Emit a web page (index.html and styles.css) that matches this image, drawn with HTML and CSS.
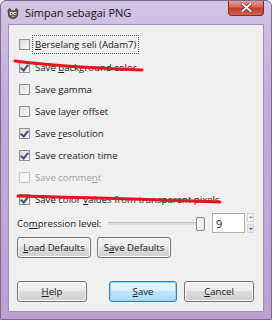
FILE: index.html
```html
<!DOCTYPE html>
<html lang="id">
<head>
<meta charset="UTF-8">
<title>Simpan sebagai PNG</title>
<link rel="stylesheet" href="styles.css">
</head>
<body>
<div class="window">
    <div class="titlebar">
        <svg class="app-icon" width="12" height="11" viewBox="0 0 12 11">
            <path d="M1 2 L3 0.5 L4 3 L8 3 L9 0.5 L11 2 L10.5 6 Q11 10 6 10.5 Q1 10 1.5 6 Z" fill="#6b6457" stroke="#2e2a24" stroke-width="0.8"/>
            <circle cx="4.3" cy="5.3" r="1.6" fill="#fff"/>
            <circle cx="7.7" cy="5.3" r="1.6" fill="#fff"/>
            <circle cx="4.6" cy="5.5" r="0.7" fill="#000"/>
            <circle cx="8" cy="5.5" r="0.7" fill="#000"/>
            <path d="M4.5 8.3 Q6 9.3 7.5 8.3" stroke="#c9a86a" stroke-width="0.9" fill="none"/>
        </svg>
        <span class="title">Simpan sebagai PNG</span>
        <div class="close">
            <svg width="11" height="9" viewBox="0 0 11 9">
                <path d="M1.5 1 L9.5 8 M9.5 1 L1.5 8" stroke="#6a2a22" stroke-width="3.2" stroke-linecap="square"/>
                <path d="M1.5 1 L9.5 8 M9.5 1 L1.5 8" stroke="#fff" stroke-width="1.8" stroke-linecap="square"/>
            </svg>
        </div>
    </div>

    <div class="content">
        <div class="options">
            <label class="row first"><span class="box"></span><span class="text focus"><u>B</u>erselang seli (Adam7)</span></label>
            <label class="row"><span class="box checked"></span><span class="text">Save <u>b</u>ackground color</span></label>
            <label class="row"><span class="box"></span><span class="text">Save gamma</span></label>
            <label class="row"><span class="box"></span><span class="text">Save layer offset</span></label>
            <label class="row"><span class="box checked"></span><span class="text">Save <u>r</u>esolution</span></label>
            <label class="row"><span class="box checked"></span><span class="text">Save creation time</span></label>
            <label class="row disabled"><span class="box"></span><span class="text">Save comme<u>n</u>t</span></label>
            <label class="row"><span class="box checked"></span><span class="text">Save color <u>v</u>alues from transparent pixels</span></label>
        </div>

        <div class="compression">
            <span class="label">Co<u>m</u>pression level:</span>
            <div class="slider"><span class="thumb"></span></div>
            <div class="spin">
                <span class="spin-value">9</span>
                <div class="arrows">
                    <span class="arrow up"></span>
                    <span class="arrow down"></span>
                </div>
            </div>
        </div>

        <div class="defaults">
            <button class="btn wide"><u>L</u>oad Defaults</button>
            <button class="btn wide">S<u>a</u>ve Defaults</button>
        </div>

        <div class="actions">
            <button class="btn"><u>H</u>elp</button>
            <div class="right">
                <button class="btn default"><u>S</u>ave</button>
                <button class="btn"><u>C</u>ancel</button>
            </div>
        </div>
    </div>

    <!-- hand-drawn marks on top of the screenshot -->
    <svg class="marks" width="272" height="320" viewBox="0 0 272 320">
        <path d="M15 61 Q60 67 142 70" stroke="#e8141c" stroke-width="3" fill="none" stroke-linecap="round"/>
        <path d="M18 196 Q110 198 220 202" stroke="#e8141c" stroke-width="3" fill="none" stroke-linecap="round"/>
    </svg>
</div>
</body>
</html>
```

FILE: styles.css
```css
body {
    margin: 0;
    background: #fff;
}

.window {
    position: relative;
    width: 272px;
    height: 320px;
    box-sizing: border-box;
    border: 1px solid #7a6a92;
    border-radius: 6px 6px 0 0;
    background: linear-gradient(#d3c4e4, #c3add9 30%, #b9a2d2);
    font-family: "Open Sans", "Noto Sans", sans-serif;
    font-size: 9.6px;
    color: #1a1a1a;
    overflow: hidden;
}

.titlebar {
    height: 23px;
    display: flex;
    align-items: flex-start;
    position: relative;
}

.app-icon {
    margin: 7px 0 0 6px;
}

.title {
    margin: 4px 0 0 6px;
    font-size: 11px;
    color: #111;
}

.close {
    position: absolute;
    right: 7px;
    top: -1px;
    width: 36px;
    height: 16px;
    box-sizing: border-box;
    border: 1px solid #7b2f2a;
    border-top: none;
    border-radius: 0 0 4px 4px;
    background: linear-gradient(#eaa898, #d66a5a 45%, #c03a2c 55%, #d4644f);
    display: flex;
    align-items: center;
    justify-content: center;
}

.content {
    margin: 0 7px;
    height: 288px;
    box-sizing: border-box;
    border: 1px solid #9d8db4;
    background: #f0f0f0;
    padding: 7px 9px 0 8px;
}

.options {
    display: flex;
    flex-direction: column;
}

.row {
    height: 22px;
    display: flex;
    align-items: center;
    padding-left: 2px;
    white-space: nowrap;
}

.row.first {
    height: 24px;
}

.box {
    width: 9px;
    height: 9px;
    border: 1px solid #8e8f8f;
    background: linear-gradient(135deg, #dcdcdc, #fbfbfb);
    margin-right: 5px;
    position: relative;
    flex: none;
}

.box.checked::after {
    content: "";
    position: absolute;
    left: 2px;
    top: 0;
    width: 3px;
    height: 6px;
    border: solid #3a4f8c;
    border-width: 0 2px 2px 0;
    transform: rotate(40deg);
}

.focus {
    outline: 1px dotted #555;
    outline-offset: 2px;
}

.disabled .text {
    color: #a2a2a2;
}

.disabled .box {
    border-color: #c6c6c6;
    background: #f4f4f4;
}

u {
    text-decoration-thickness: 1px;
    text-underline-offset: 1px;
}

.compression {
    height: 22px;
    margin-top: 2px;
    display: flex;
    align-items: center;
}

.label {
    white-space: nowrap;
    flex: none;
}

.slider {
    position: relative;
    flex: 1;
    height: 2px;
    margin-left: 6px;
    background: #dcdcdc;
    border-top: 1px solid #c0c0c0;
}

.thumb {
    position: absolute;
    right: 0;
    top: -6px;
    width: 7px;
    height: 12px;
    border: 1px solid #8a8a8a;
    border-radius: 2px;
    background: linear-gradient(90deg, #fdfdfd, #dedede);
}

.spin {
    display: flex;
    align-items: stretch;
    margin-left: 7px;
    height: 20px;
    flex: none;
}

.spin-value {
    width: 28px;
    border: 1px solid #abadb3;
    background: #fff;
    padding-left: 3px;
    line-height: 19px;
    font-size: 11px;
}

.arrows {
    display: flex;
    flex-direction: column;
    justify-content: space-between;
    margin-left: 2px;
    width: 7px;
}

.arrow {
    height: 9px;
    border: 1px solid #d4d4d4;
    box-sizing: border-box;
    background: #f4f4f4;
    position: relative;
}

.arrow::after {
    content: "";
    position: absolute;
    left: 1px;
    border-left: 2px solid transparent;
    border-right: 2px solid transparent;
}

.arrow.up::after {
    top: 2px;
    border-bottom: 2px solid #8a8a8a;
}

.arrow.down {
    background: #dfe8f4;
}

.arrow.down::after {
    top: 3px;
    border-top: 2px solid #3c5c9a;
}

.defaults {
    display: flex;
    gap: 6px;
    margin-top: 3px;
}

.btn {
    height: 21px;
    width: 70px;
    padding: 0;
    border: 1px solid #707070;
    border-radius: 3px;
    background: linear-gradient(#f2f2f2 0%, #ebebeb 45%, #dddddd 50%, #cfcfcf 100%);
    box-shadow: inset 0 0 0 1px #fbfbfb;
    font-family: inherit;
    font-size: 9.6px;
    color: #1a1a1a;
}

.btn.wide {
    width: 74px;
}

.btn.default {
    width: 68px;
    border-color: #3c7fb1;
    box-shadow: inset 0 0 0 1px #8fd3f2;
    background: linear-gradient(#eaf6fd 0%, #d9f0fc 45%, #bee6fd 50%, #a7d9f5 100%);
}

.actions {
    display: flex;
    justify-content: space-between;
    margin-top: 23px;
}

.right {
    display: flex;
    gap: 7px;
}

.marks {
    position: absolute;
    left: -1px;
    top: -1px;
}
```
